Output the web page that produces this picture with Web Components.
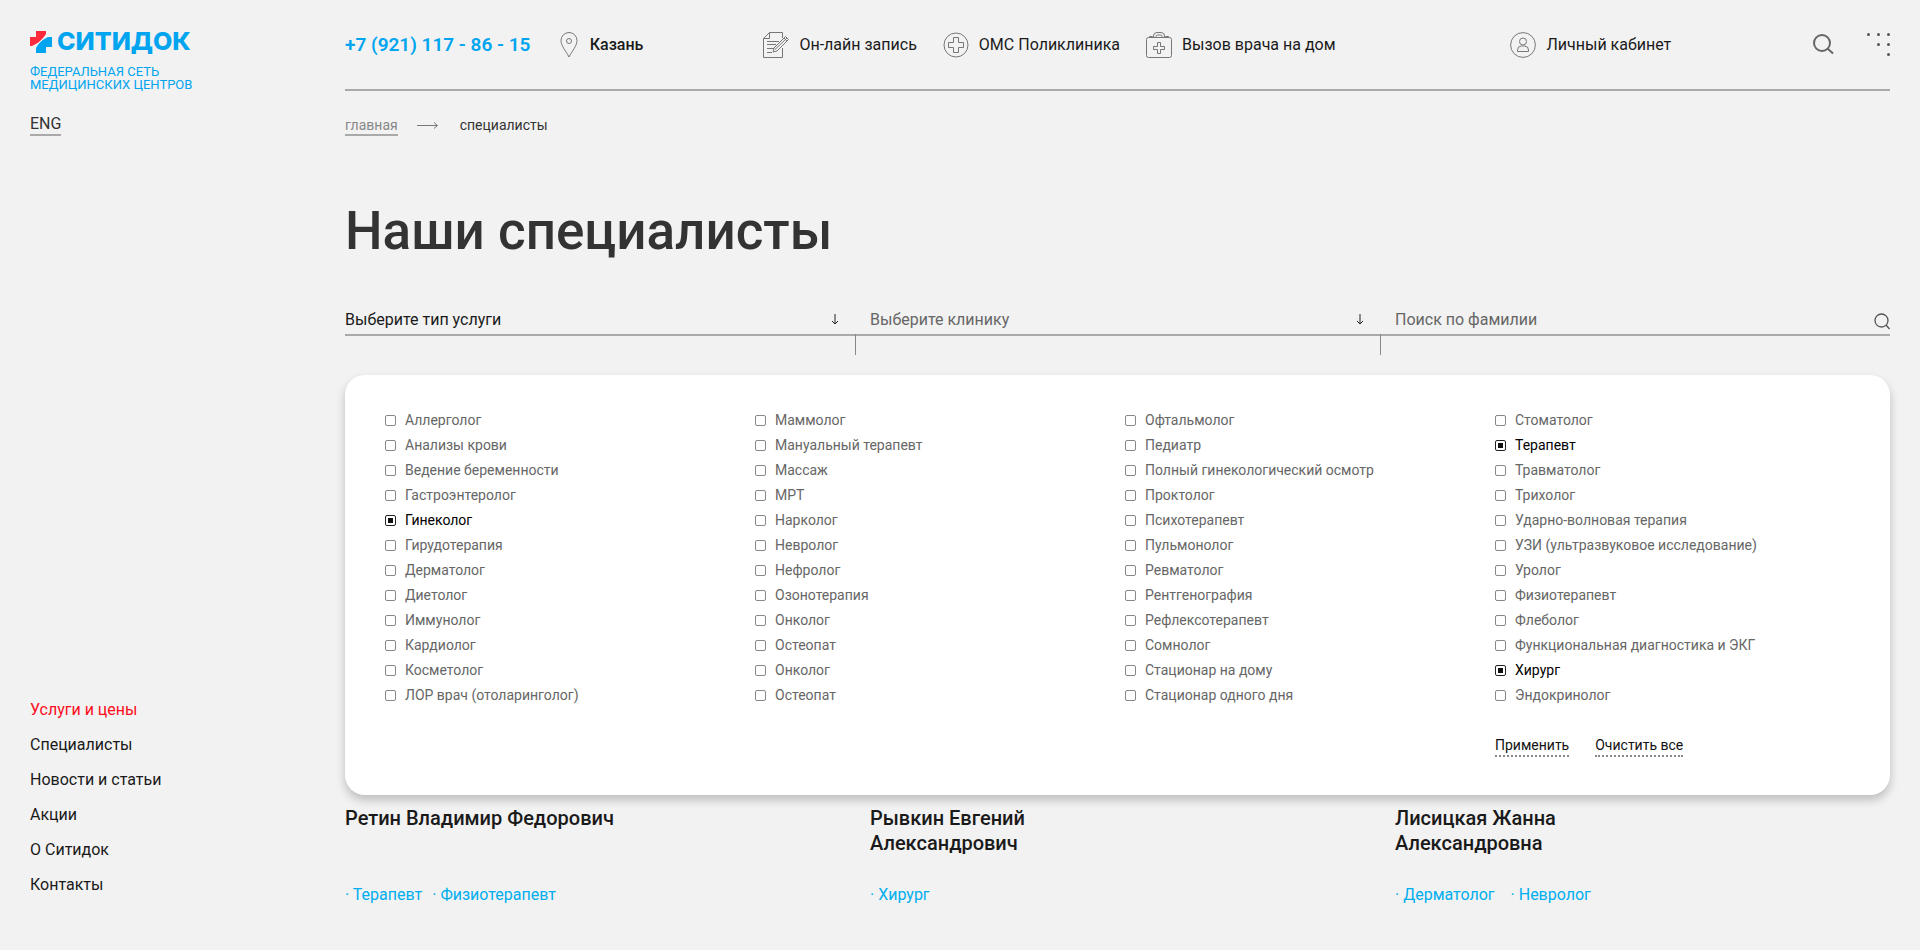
<!DOCTYPE html>
<html lang="ru">
<head>
<meta charset="utf-8">
<meta name="viewport" content="width=device-width, initial-scale=1">
<title>Наши специалисты — Ситидок</title>
<style>
  body {
    margin: 0;
    background: #f2f2f2;
    color: #1a1a1a;
    font-family: Roboto, "Liberation Sans", sans-serif;
    font-size: 16px;
    line-height: 20px;
  }
</style>
</head>
<body>
<clinic-page></clinic-page>

<script>
const define = (name, html, setup) => {
  const template = document.createElement('template');
  template.innerHTML = html;
  customElements.define(name, class extends HTMLElement {
    constructor() {
      super();
      this.attachShadow({ mode: 'open' }).append(template.content.cloneNode(true));
    }
    connectedCallback() {
      if (setup && !this.ready) {
        this.ready = true;
        setup(this, this.shadowRoot);
      }
    }
  });
};

/* Logo with the tagline */
define('site-logo', `
  <style>
    :host { display: block; color: #00a4ef; }
    a { display: block; color: inherit; text-decoration: none; }
    .brand { display: flex; align-items: center; gap: 5px; height: 23px; font-family: Inter, sans-serif; font-size: 25px; line-height: 23px; font-weight: 800; }
    svg { width: 22px; height: 22px; flex: none; }
    .tagline { display: block; margin-top: 12px; font-size: 13px; line-height: 13px; white-space: nowrap; }
  </style>
  <a href="#">
    <span class="brand">
      <svg viewBox="0 0 22 22" aria-hidden="true">
        <path fill="#ff2a3c" d="M6 0h10v3C13 8 7 13 2 15H0V6h6z"/>
        <path fill="#00a4ef" d="M22 6h-4C13 8 8 13 6 17v5h10v-6h6z"/>
      </svg>
      <span>СИТИДОК</span>
    </span>
    <span class="tagline">ФЕДЕРАЛЬНАЯ СЕТЬ<br>МЕДИЦИНСКИХ ЦЕНТРОВ</span>
  </a>`);

/* Left column: logo, language switch, main navigation */
define('side-bar', `
  <style>
    :host { display: flex; flex-direction: column; box-sizing: border-box; padding: 30px 30px 48px; }
    .lang { align-self: flex-start; margin-top: 23px; border-bottom: 2px solid #aaa; color: #333; text-decoration: none; }
    nav { margin-top: auto; display: flex; flex-direction: column; align-items: flex-start; }
    nav a { color: #1a1a1a; text-decoration: none; line-height: 35px; }
    nav a[aria-current] { color: #fc0d1b; }
  </style>
  <site-logo></site-logo>
  <a class="lang" href="#">ENG</a>
  <nav aria-label="Разделы">
    <a href="#" aria-current="true">Услуги и цены</a>
    <a href="#">Специалисты</a>
    <a href="#">Новости и статьи</a>
    <a href="#">Акции</a>
    <a href="#">О Ситидок</a>
    <a href="#">Контакты</a>
  </nav>`);

/* Link with an outline icon in front of its label */
define('icon-link', `
  <style>
    :host { display: block; }
    a { display: flex; align-items: center; gap: 10px; color: #1a1a1a; text-decoration: none; white-space: nowrap; }
    ::slotted(svg) { flex: none; fill: none; stroke: #777; stroke-width: 1; }
  </style>
  <a href="#"><slot name="icon"></slot><slot></slot></a>`);

define('site-header', `
  <style>
    :host { display: grid; grid-template-columns: 215fr 204fr 748fr 303fr 77fr; align-items: center; height: 89px; border-bottom: 2px solid #aaa; }
    .phone { color: #00a4ef; font-size: 19px; font-weight: 600; text-decoration: none; white-space: nowrap; }
    .city { font-weight: 500; }
    .links { display: flex; gap: 26px; }
    .tools { display: flex; justify-content: space-between; align-items: center; }
    button { display: block; padding: 0; border: 0; background: none; }
    button svg { display: block; }
  </style>
  <a class="phone" href="tel:+79211178615">+7 (921) 117 - 86 - 15</a>
  <icon-link class="city">
    <svg slot="icon" width="20" height="26" viewBox="0 0 20 26"><path d="M9 25C6 19 1 14 1 8.500a8 8 0 0 1 16 0C17 14 12 19 9 25z"/><circle cx="9" cy="9" r="2.500"/></svg>
    Казань
  </icon-link>
  <div class="links">
    <icon-link>
      <svg slot="icon" width="26" height="26" viewBox="0 0 26 26"><path d="M19.500 6V.5h-13l-6 6v19h19V16M6.500.5v6h-6M4 9.500h12M4 12.500h9M4 16.500h7M4 20.500h5"/><path d="M10 20l1-4L22.500 4.500l3 3L14 19l-4 1zM12 17.500L24 6M21 6l3 3"/></svg>
      Он-лайн запись
    </icon-link>
    <icon-link>
      <svg slot="icon" width="26" height="26" viewBox="0 0 26 26"><circle cx="13" cy="13" r="12"/><path d="M10.500 5.500h5v5h5v5h-5v5h-5v-5h-5v-5h5z"/></svg>
      ОМС Поликлиника
    </icon-link>
    <icon-link>
      <svg slot="icon" width="26" height="26" viewBox="0 0 26 26"><rect x=".5" y="5.500" width="25" height="20" rx="2"/><path d="M11.500 10.500h3v4h4v3h-4v4h-3v-4h-4v-3h4zM3.500 5.500v-1h3v1M19.500 5.500v-1h3v1M7.500 5.500V4q0-3.500 3.500-3.500h4q3.500 0 3.500 3.500v1.500M10 5.500V4.500q0-1.500 1.500-1.500h3q1.500 0 1.500 1.500v1"/></svg>
      Вызов врача на дом
    </icon-link>
  </div>
  <icon-link>
    <svg slot="icon" width="26" height="26" viewBox="0 0 26 26"><circle cx="13" cy="13" r="12.400"/><circle cx="13" cy="9.500" r="3.500"/><path d="M7.500 19.500v-1.500q0-4 4-4h3q4 0 4 4v1.500z"/></svg>
    Личный кабинет
  </icon-link>
  <div class="tools">
    <button type="button" aria-label="Поиск"><svg width="21" height="21" viewBox="0 0 21 21" fill="none" stroke="#666" stroke-width="2"><circle cx="9" cy="9" r="8"/><path d="M14.500 14.500l5.500 5"/></svg></button>
    <button type="button" aria-label="Меню"><svg width="23" height="23" viewBox="0 0 23 23" fill="#555"><circle cx="1.500" cy="1.500" r="1.500"/><circle cx="11.500" cy="1.500" r="1.500"/><circle cx="21.500" cy="1.500" r="1.500"/><circle cx="11.500" cy="11.500" r="1.500"/><circle cx="21.500" cy="11.500" r="1.500"/><circle cx="21.500" cy="21.500" r="1.500"/></svg></button>
  </div>`);

define('bread-crumbs', `
  <style>
    :host { display: block; margin-top: 25px; font-size: 14px; line-height: 18px; }
    nav { display: flex; align-items: flex-start; gap: 19px; height: 20px; }
    a { color: #888; text-decoration: none; border-bottom: 2px solid #aaa; }
    svg { width: 24px; height: 18px; }
    span { color: #333; }
  </style>
  <nav aria-label="Навигация">
    <a href="#">главная</a>
    <svg viewBox="0 0 24 18" fill="none" stroke="#777" aria-hidden="true"><path d="M0 9.500h20M17 6.500l3.500 3-3.500 3"/></svg>
    <span aria-current="page">специалисты</span>
  </nav>`);

/* Row of filters over a common rule */
define('filter-bar', `
  <style>
    :host { display: grid; grid-template-columns: repeat(3, 1fr); gap: 30px; margin-top: 43px; border-bottom: 2px solid #aaa; }
    label { position: relative; display: flex; align-items: center; height: 30px; }
    label + label::before { content: ""; position: absolute; left: -15px; top: 100%; height: 21px; border-left: 1px solid #888; }
    select, input { flex: 1; min-width: 0; height: 30px; padding: 0; border: 0; border-radius: 0; outline: 0; background: none; appearance: none; color: #666; font: inherit; }
    select { padding-top: 1px; }
    select.active { color: #1a1a1a; }
    input::placeholder { color: #666; opacity: 1; }
    svg { flex: none; fill: none; stroke: #555; }
    .arrow { margin-right: 1px; stroke: #222; }
  </style>
  <label>
    <select class="active" aria-label="Тип услуги"><option>Выберите тип услуги</option></select>
    <svg class="arrow" width="8" height="12" viewBox="0 0 8 12"><path d="M4 1v10M1 8l3 3 3-3"/></svg>
  </label>
  <label>
    <select aria-label="Клиника"><option>Выберите клинику</option></select>
    <svg class="arrow" width="8" height="12" viewBox="0 0 8 12"><path d="M4 1v10M1 8l3 3 3-3"/></svg>
  </label>
  <label>
    <input type="search" aria-label="Поиск по фамилии" placeholder="Поиск по фамилии">
    <svg width="16" height="22" viewBox="0 0 16 22" stroke-width="1.300"><circle cx="7.500" cy="12.500" r="6.500"/><path d="M12 17l3.500 4"/></svg>
  </label>`);

define('service-option', `
  <style>
    :host { display: block; }
    label { display: flex; align-items: center; gap: 9px; height: 25px; color: #666; font-size: 14px; line-height: 25px; white-space: nowrap; }
    input { flex: none; box-sizing: border-box; width: 11px; height: 11px; margin: 0; appearance: none; border: 1px solid #888; border-radius: 2px; background: #fff; }
    input:checked { border-color: #222; background: linear-gradient(#111, #111) center / 5px 5px no-repeat; }
    label:has(:checked) { color: #000; }
  </style>
  <label><input type="checkbox"><slot></slot></label>`,
  (host, root) => { root.querySelector('input').checked = host.hasAttribute('checked'); });

/* Card that lists every service in four columns */
define('service-panel', `
  <style>
    :host { display: block; margin-top: 39px; padding: 33px 40px 38px; border-radius: 20px; background: #fff; box-shadow: 0 5px 10px rgba(0, 0, 0, .22); }
    .columns { display: grid; grid-template-columns: repeat(4, 1fr); column-gap: 15px; }
    .actions { grid-column: 4; display: flex; gap: 26px; margin-top: 28px; }
    button { padding: 0; border: 0; border-bottom: 2px dotted #888; background: none; color: #111; font: inherit; font-size: 14px; line-height: 19px; }
  </style>
  <div class="columns">
    <div class="actions"><button type="button">Применить</button><button type="button">Очистить все</button></div>
  </div>`,
  (host, root) => {
    const columns = [
      ['Аллерголог', 'Анализы крови', 'Ведение беременности', 'Гастроэнтеролог', '*Гинеколог', 'Гирудотерапия', 'Дерматолог', 'Диетолог', 'Иммунолог', 'Кардиолог', 'Косметолог', 'ЛОР врач (отоларинголог)'],
      ['Маммолог', 'Мануальный терапевт', 'Массаж', 'МРТ', 'Нарколог', 'Невролог', 'Нефролог', 'Озонотерапия', 'Онколог', 'Остеопат', 'Онколог', 'Остеопат'],
      ['Офтальмолог', 'Педиатр', 'Полный гинекологический осмотр', 'Проктолог', 'Психотерапевт', 'Пульмонолог', 'Ревматолог', 'Рентгенография', 'Рефлексотерапевт', 'Сомнолог', 'Стационар на дому', 'Стационар одного дня'],
      ['Стоматолог', '*Терапевт', 'Травматолог', 'Трихолог', 'Ударно-волновая терапия', 'УЗИ (ультразвуковое исследование)', 'Уролог', 'Физиотерапевт', 'Флеболог', 'Функциональная диагностика и ЭКГ', '*Хирург', 'Эндокринолог']
    ];
    const actions = root.querySelector('.actions');
    for (const names of columns) {
      const column = document.createElement('div');
      for (const name of names) {
        const option = document.createElement('service-option');
        option.textContent = name.replace('*', '');
        option.toggleAttribute('checked', name.startsWith('*'));
        column.append(option);
      }
      actions.before(column);
    }
  });

define('doctor-card', `
  <style>
    :host { display: block; }
    h2 { margin: 0; min-height: 50px; max-width: 270px; font-size: 20px; line-height: 25px; font-weight: 500; }
    .skills { display: flex; gap: var(--skill-gap, 10px); margin-top: 29px; color: #00aeef; }
  </style>
  <h2><slot name="name"></slot></h2>
  <div class="skills"><slot></slot></div>`);

define('clinic-page', `
  <style>
    :host { display: flex; min-height: 100vh; }
    side-bar { flex: 0 0 345px; }
    main { flex: 1; min-width: 0; padding-right: 30px; }
    h1 { margin: 65px 0 0; color: #333; font-size: 53px; line-height: 60px; font-weight: 500; }
    .doctors { display: grid; grid-template-columns: repeat(3, 1fr); gap: 30px; margin-top: 11px; }
    .doctors a { color: inherit; text-decoration: none; }
    .wide { --skill-gap: 16px; }
  </style>
  <side-bar></side-bar>
  <main>
    <site-header></site-header>
    <bread-crumbs></bread-crumbs>
    <h1>Наши специалисты</h1>
    <filter-bar></filter-bar>
    <service-panel></service-panel>
    <div class="doctors">
      <doctor-card><span slot="name">Ретин Владимир Федорович</span><a href="#">· Терапевт</a><a href="#">· Физиотерапевт</a></doctor-card>
      <doctor-card><span slot="name">Рывкин Евгений<br>Александрович</span><a href="#">· Хирург</a></doctor-card>
      <doctor-card class="wide"><span slot="name">Лисицкая Жанна<br>Александровна</span><a href="#">· Дерматолог</a><a href="#">· Невролог</a></doctor-card>
    </div>
  </main>`);
</script>
</body>
</html>
